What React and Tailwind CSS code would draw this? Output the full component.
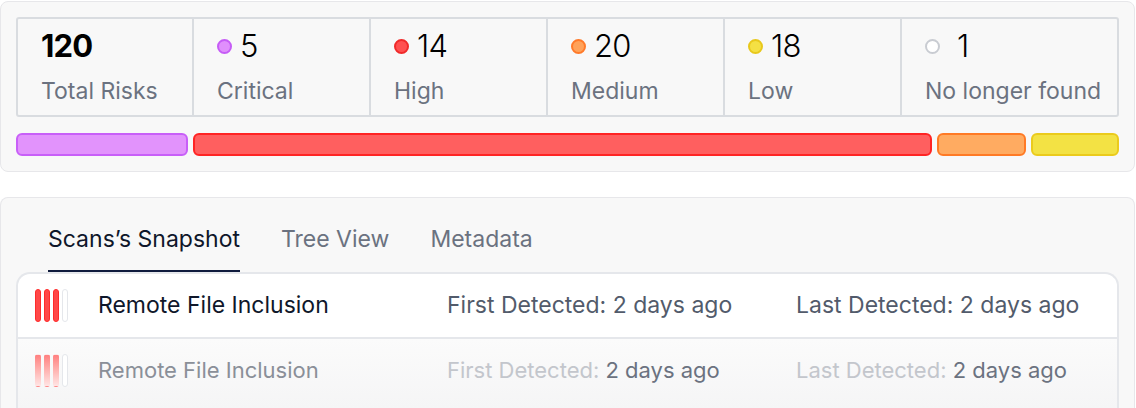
import React from 'react';

const STATS = [
  { count: 5,  label: 'Critical',         dot: 'bg-[#e08ffc] border-[#c65cf6]' },
  { count: 14, label: 'High',             dot: 'bg-[#ff5050] border-[#f02a2a]' },
  { count: 20, label: 'Medium',           dot: 'bg-[#ffa25a] border-[#ff7a2a]' },
  { count: 18, label: 'Low',              dot: 'bg-[#f4e044] border-[#e8c81c]' },
  { count: 1,  label: 'No longer found',  dot: 'bg-white border-[#c9ccd2]' },
];

const BARS = [
  { w: 'w-[172px]', cls: 'bg-[#e293fc] border-[#c85ff8]' },
  { w: 'flex-1',    cls: 'bg-[#ff5f5f] border-[#ff2424]' },
  { w: 'w-[89px]',  cls: 'bg-[#ffab61] border-[#ff7a25]' },
  { w: 'w-[88px]',  cls: 'bg-[#f3e244] border-[#ebcb1c]' },
];

function SeverityIcon({ faded }) {
  const on = faded
    ? 'bg-gradient-to-b from-[#ff8080] to-[#ffe5e5] border-transparent'
    : 'bg-[#ff4848] border-[#ff2b2b]';
  return (
    <div className="flex gap-[3px] items-stretch h-[33px]">
      <span className={`w-[6px] rounded-full border ${on}`} />
      <span className={`w-[6px] rounded-full border ${on}`} />
      <span className={`w-[6px] rounded-full border ${on}`} />
      <span className="w-[6px] rounded-full border border-[#e5e7eb] bg-white" />
    </div>
  );
}

export default function App() {
  return (
    <div className="w-[1136px] h-[408px] overflow-hidden bg-white pt-px flex flex-col gap-[25px]" style={{ fontFamily: 'Inter, "Noto Sans", sans-serif' }}>
      {/* Risk summary */}
      <div className="w-[1135px] rounded-lg border border-[#e7e7ea] bg-[#f8f8f8] p-[15px] flex flex-col gap-[16px]">
        <div className="flex h-[100px] border-2 border-[#d9dce0] rounded-[3px]">
          <div className="w-[174px] pl-[23px] pt-[7px] flex flex-col">
            <span className="text-[31px] leading-[40px] font-bold text-black tracking-tight">120</span>
            <span className="mt-[10px] text-[23px] leading-[30px] text-[#6b7280]">Total Risks</span>
          </div>
          {STATS.map((s, i) => (
            <div key={s.label} className={`${i === 4 ? 'flex-1' : 'w-[177px]'} border-l-2 border-[#d9dce0] pl-[23px] pt-[7px] flex flex-col`}>
              <div className="flex items-center gap-[8px]">
                <span className={`w-[15px] h-[15px] rounded-full border-2 ${s.dot} ${i === 4 ? 'mr-[9px]' : ''}`} />
                <span className="text-[31px] leading-[40px] font-light text-black tracking-tight">{s.count}</span>
              </div>
              <span className="mt-[10px] text-[23px] leading-[30px] text-[#6b7280]">{s.label}</span>
            </div>
          ))}
        </div>
        <div className="flex gap-[5px] h-[23px]">
          {BARS.map((b, i) => (
            <div key={i} className={`${b.w} rounded-[6px] border-2 ${b.cls}`} />
          ))}
        </div>
      </div>

      {/* Scan details */}
      <div className="w-[1135px] flex-1 rounded-t-lg border border-b-0 border-[#e7e7ea] bg-[#f8f8f8] px-[15px] flex flex-col">
        <div className="flex gap-[41px] pl-[32px] pt-[26px]">
          <div className="pb-[16px] border-b-2 border-[#0f1b3d] text-[23px] leading-[30px] text-[#0f172a]">Scans’s Snapshot</div>
          <div className="pb-[16px] text-[23px] leading-[30px] text-[#6b7280]">Tree View</div>
          <div className="pb-[16px] text-[23px] leading-[30px] text-[#6b7280]">Metadata</div>
        </div>
        <div className="flex-1 rounded-t-[14px] border-2 border-b-0 border-[#e5e7eb] bg-white flex flex-col">
          <div className="h-[65px] flex items-center pl-[17px] border-b-2 border-[#e5e7eb]">
            <SeverityIcon />
            <span className="ml-[30px] w-[349px] text-[23px] text-[#0f172a]">Remote File Inclusion</span>
            <span className="w-[349px] text-[23px] text-[#525b6b]">First Detected: 2 days ago</span>
            <span className="text-[23px] text-[#525b6b]">Last Detected: 2 days ago</span>
          </div>
          <div className="flex-1 flex items-start pt-[15px] pl-[17px] bg-gradient-to-b from-[#fbfbfb] to-[#f5f5f6]">
            <SeverityIcon faded />
            <span className="ml-[30px] w-[349px] text-[22px] text-[#8a8f98]">Remote File Inclusion</span>
            <span className="w-[349px] text-[22px] text-[#6b7280]"><span className="text-[#c3c6cc]">First Detected:</span> 2 days ago</span>
            <span className="text-[22px] text-[#6b7280]"><span className="text-[#c3c6cc]">Last Detected:</span> 2 days ago</span>
          </div>
        </div>
      </div>
    </div>
  );
}
